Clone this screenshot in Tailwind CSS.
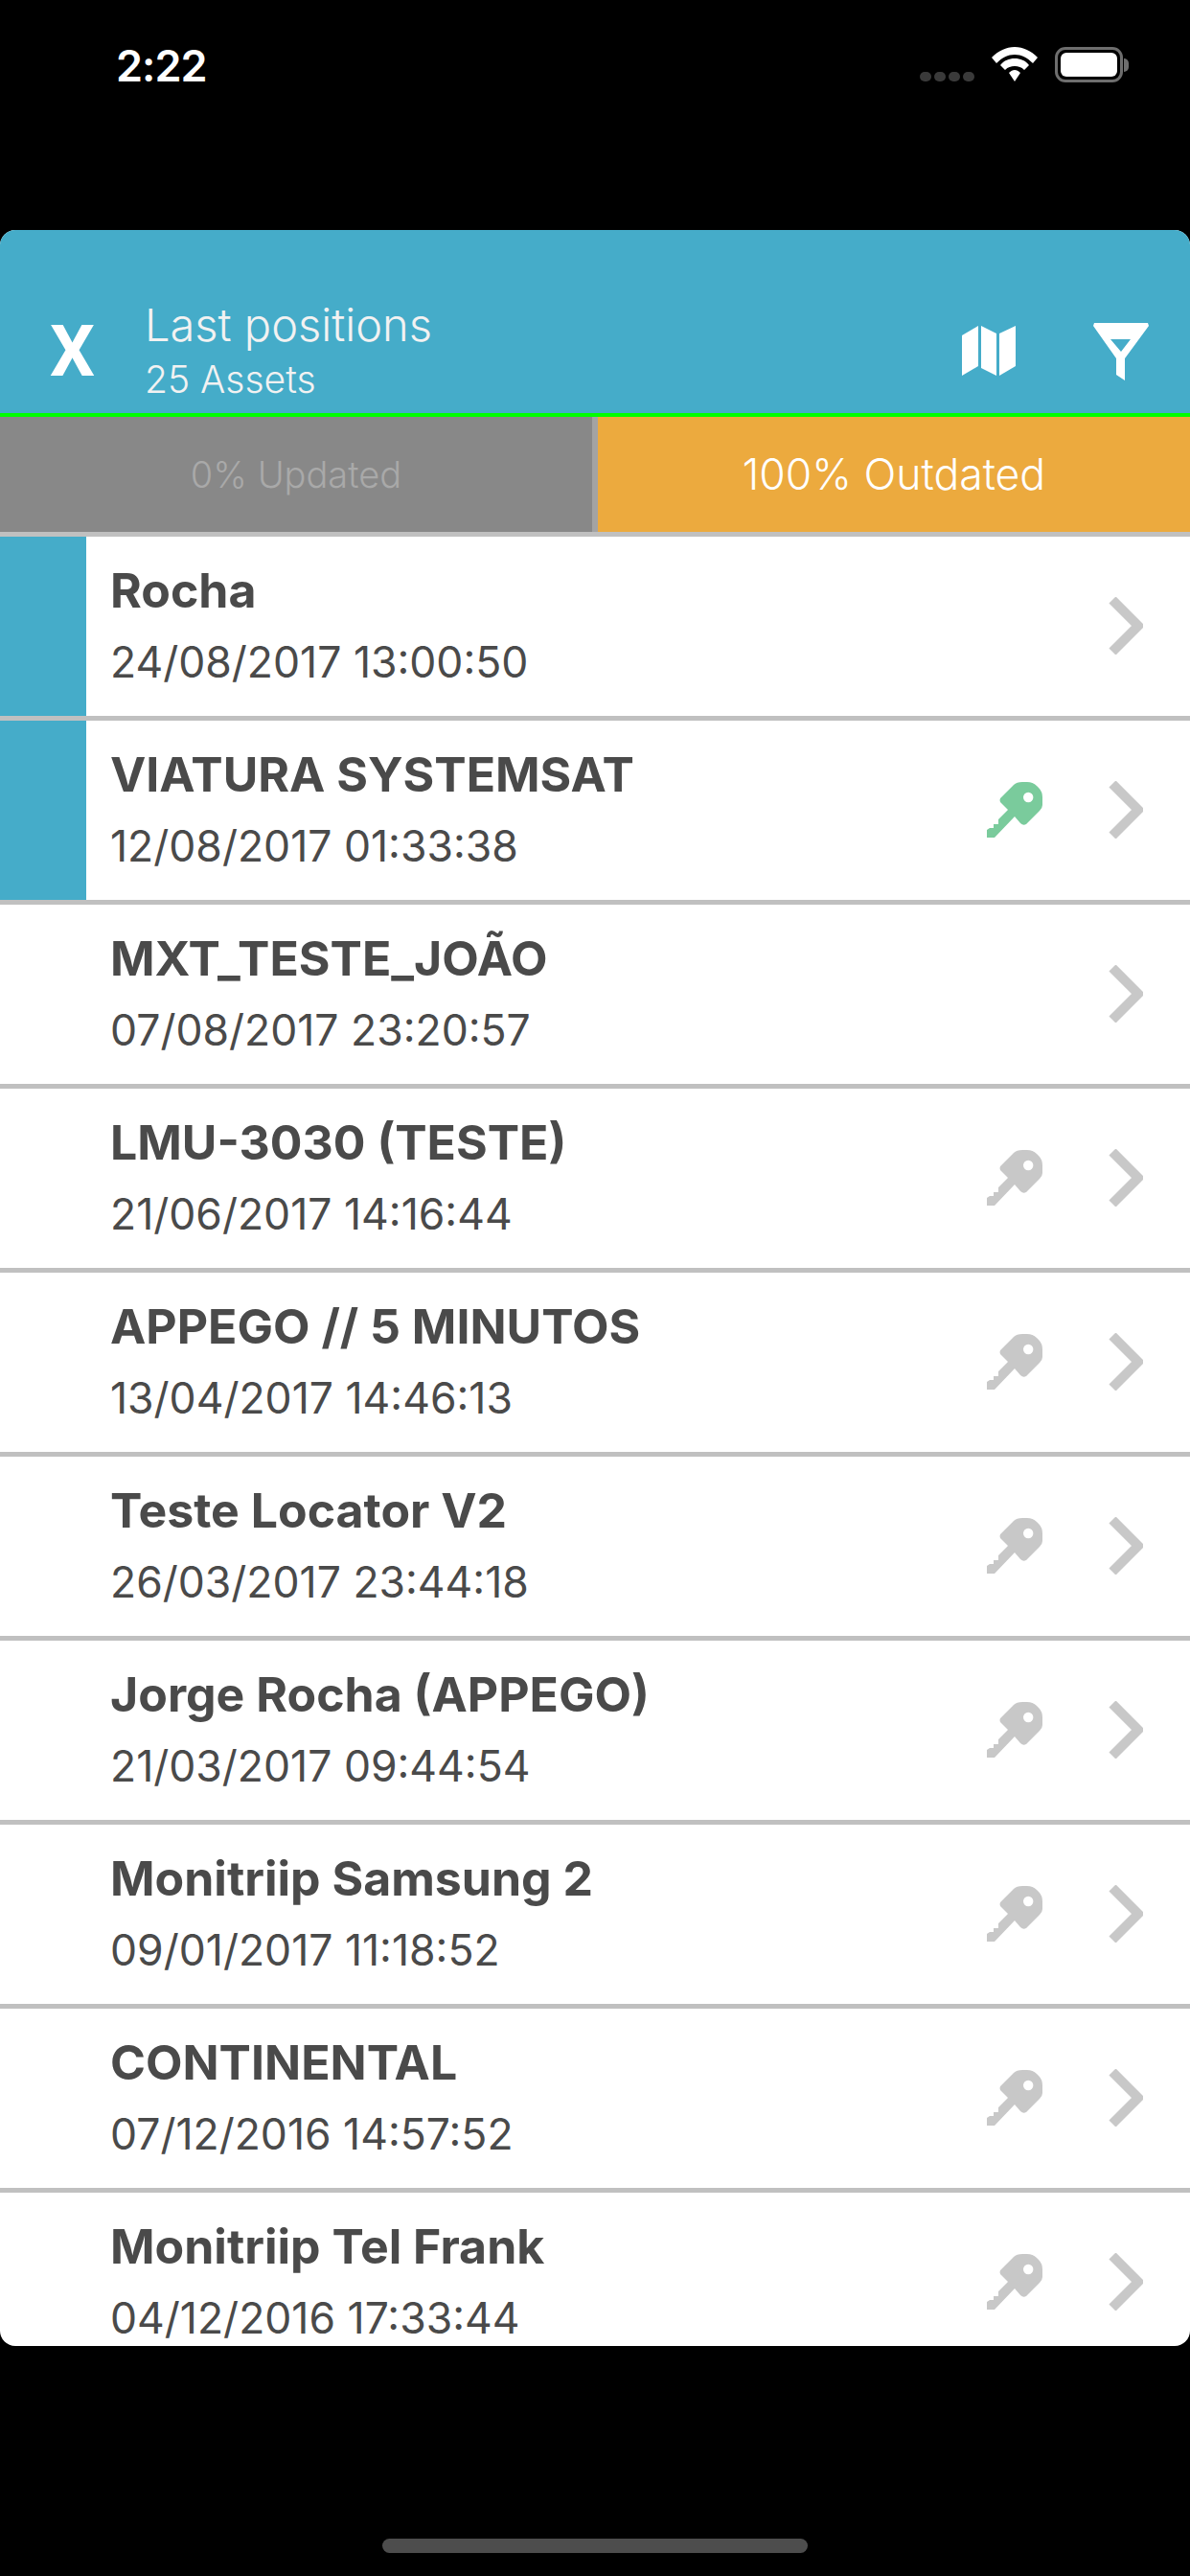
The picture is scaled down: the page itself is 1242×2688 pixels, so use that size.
<!DOCTYPE html>
<html lang="en">
<head>
  <meta charset="UTF-8" />
  <title>Last positions</title>
  <meta name="viewport" content="width=device-width, initial-scale=1.0" />
  <script src="https://cdn.jsdelivr.net/npm/@tailwindcss/browser@4"></script>
</head>
<body class="bg-black w-[1242px] h-[2688px] overflow-hidden font-['Inter',sans-serif]">

  <svg class="hidden">
    <symbol id="key" viewBox="0 0 58 58">
      <path fill-rule="evenodd" d="M14 17 L28 3 Q31 0 37 0 L42 0 Q48 0 52 4 L54 6 Q58 10 58 16 L58 24 Q58 27 55 30 L41 44 Q38 46 35 43 L29 36 L8 58 L0 58 L0 50 L3 48 L7 48 L7 44 L12 44 L12 39 L22 29 L14 21 Q13 19 14 17 Z M38 16 A5.2 5.2 0 1 0 48.400 16 A5.2 5.2 0 1 0 38 16 Z"/>
    </symbol>
    <symbol id="chevron" viewBox="0 0 36 60">
      <path d="M4 3 L31 30 L4 57" fill="none" stroke="currentColor" stroke-width="10"/>
    </symbol>
  </svg>

  <!-- status bar -->
  <div class="h-[240px] pt-[42px] pl-[121px] pr-[64px] flex items-start justify-between text-white">
    <span class="text-[45px] leading-[54px] font-semibold tracking-[-1px]">2:22</span>
    <div class="flex items-start gap-[18px] pt-[7px]">
      <div class="flex gap-[3px] pt-[26px]">
        <span class="w-[12px] h-[10px] rounded-full bg-[#3a3a3a]"></span>
        <span class="w-[12px] h-[10px] rounded-full bg-[#3a3a3a]"></span>
        <span class="w-[12px] h-[10px] rounded-full bg-[#3a3a3a]"></span>
        <span class="w-[12px] h-[10px] rounded-full bg-[#3a3a3a]"></span>
      </div>
      <svg width="48" height="36" viewBox="0 0 48 36" fill="white">
        <path d="M24 0 C33 0 41 4 48 11 L43 17 C37 11 31 8 24 8 C17 8 11 11 5 17 L0 11 C7 4 15 0 24 0 Z"/>
        <path d="M24 12 C30 12 35 14 39 19 L34 24 C31 21 28 20 24 20 C20 20 17 21 14 24 L9 19 C13 14 18 12 24 12 Z"/>
        <path d="M24 24 C26 24 28 25 30 27 L24 36 L18 27 C20 25 22 24 24 24 Z"/>
      </svg>
      <div class="flex items-center">
        <div class="w-[71px] h-[37px] rounded-[11px] border-[3px] border-[#6e6e6e] p-[3px]">
          <div class="w-full h-full rounded-[6px] bg-white"></div>
        </div>
        <div class="w-[5px] h-[14px] rounded-r-full bg-[#6e6e6e] ml-[1px]"></div>
      </div>
    </div>
  </div>

  <!-- card -->
  <div class="h-[2208px] rounded-[16px] overflow-hidden bg-white">
    <header class="h-[191px] bg-[#45acc9] flex items-end text-white pb-[14px]">
      <span class="w-[151px] pl-[52px] pb-[14px] text-[74px] leading-[72px] font-['Roboto',sans-serif] font-bold">X</span>
      <div class="flex-1 text-[#f2f2f2] font-light">
        <div class="text-[47px] leading-[56px] mb-[8px]">Last positions</div>
        <div class="text-[39px] leading-[42px]">25 Assets</div>
      </div>
      <svg class="mr-[81px] mb-[25px]" width="56" height="52" viewBox="0 0 56 52" fill="white">
        <path d="M0 10 L17 0 L17 42 L0 52 Z"/>
        <path d="M20 0 L36 8 L36 52 L20 44 Z"/>
        <path d="M39 8 L56 0 L56 42 L39 52 Z"/>
      </svg>
      <svg class="mr-[43px] mb-[20px]" width="58" height="60" viewBox="0 0 58 60" fill="white">
        <path fill-rule="evenodd" d="M1 0 L57 0 L58 3 L33 37 L33 60 L24 54 L24 37 L0 3 Z M18 17 L29 30 L39 17 Z"/>
      </svg>
    </header>
    <div class="h-[4px] bg-[#00ff00]"></div>

    <div class="flex h-[120px]">
      <div class="w-[618px] bg-[#888888] text-[#a9a9a9] text-[38px] font-light flex items-center justify-center">0% Updated</div>
      <div class="w-[6px] bg-[#a3a3a3]"></div>
      <div class="flex-1 bg-[#ecaa3e] text-white text-[44.5px] font-light flex items-center justify-center">100% Outdated</div>
    </div>
    <div class="h-[5px] bg-[#c0c0c0]"></div>

    <ul class="text-[#4a4a4a]">
      <li class="h-[192px] flex border-b-[5px] border-[#c0c0c0]">
        <div class="w-[90px] bg-[#45acc9]"></div>
        <div class="flex-1 pl-[25px] pt-[26px]">
          <div class="text-[50px] leading-[60px] font-bold">Rocha</div>
          <div class="text-[44.5px] leading-[52px] mt-[19px] font-normal">24/08/2017 13:00:50</div>
        </div>
        <svg class="w-[36px] h-[60px] mt-[63px] mr-[49px] text-[#c8c8c8]"><use href="#chevron"/></svg>
      </li>
      <li class="h-[192px] flex border-b-[5px] border-[#c0c0c0]">
        <div class="w-[90px] bg-[#45acc9]"></div>
        <div class="flex-1 pl-[25px] pt-[26px]">
          <div class="text-[50px] leading-[60px] font-bold">VIATURA SYSTEMSAT</div>
          <div class="text-[44.5px] leading-[52px] mt-[19px] font-normal">12/08/2017 01:33:38</div>
        </div>
        <svg class="w-[58px] h-[58px] mt-[64px] mr-[69px] fill-[#7acb9c]"><use href="#key"/></svg>
        <svg class="w-[36px] h-[60px] mt-[63px] mr-[49px] text-[#c8c8c8]"><use href="#chevron"/></svg>
      </li>
      <li class="h-[192px] flex border-b-[5px] border-[#c0c0c0]">
        <div class="flex-1 pl-[115px] pt-[26px]">
          <div class="text-[50px] leading-[60px] font-bold">MXT_TESTE_JOÃO</div>
          <div class="text-[44.5px] leading-[52px] mt-[19px] font-normal">07/08/2017 23:20:57</div>
        </div>
        <svg class="w-[36px] h-[60px] mt-[63px] mr-[49px] text-[#c8c8c8]"><use href="#chevron"/></svg>
      </li>
      <li class="h-[192px] flex border-b-[5px] border-[#c0c0c0]">
        <div class="flex-1 pl-[115px] pt-[26px]">
          <div class="text-[50px] leading-[60px] font-bold">LMU-3030 (TESTE)</div>
          <div class="text-[44.5px] leading-[52px] mt-[19px] font-normal">21/06/2017 14:16:44</div>
        </div>
        <svg class="w-[58px] h-[58px] mt-[64px] mr-[69px] fill-[#c8c8c8]"><use href="#key"/></svg>
        <svg class="w-[36px] h-[60px] mt-[63px] mr-[49px] text-[#c8c8c8]"><use href="#chevron"/></svg>
      </li>
      <li class="h-[192px] flex border-b-[5px] border-[#c0c0c0]">
        <div class="flex-1 pl-[115px] pt-[26px]">
          <div class="text-[50px] leading-[60px] font-bold">APPEGO // 5 MINUTOS</div>
          <div class="text-[44.5px] leading-[52px] mt-[19px] font-normal">13/04/2017 14:46:13</div>
        </div>
        <svg class="w-[58px] h-[58px] mt-[64px] mr-[69px] fill-[#c8c8c8]"><use href="#key"/></svg>
        <svg class="w-[36px] h-[60px] mt-[63px] mr-[49px] text-[#c8c8c8]"><use href="#chevron"/></svg>
      </li>
      <li class="h-[192px] flex border-b-[5px] border-[#c0c0c0]">
        <div class="flex-1 pl-[115px] pt-[26px]">
          <div class="text-[50px] leading-[60px] font-bold">Teste Locator V2</div>
          <div class="text-[44.5px] leading-[52px] mt-[19px] font-normal">26/03/2017 23:44:18</div>
        </div>
        <svg class="w-[58px] h-[58px] mt-[64px] mr-[69px] fill-[#c8c8c8]"><use href="#key"/></svg>
        <svg class="w-[36px] h-[60px] mt-[63px] mr-[49px] text-[#c8c8c8]"><use href="#chevron"/></svg>
      </li>
      <li class="h-[192px] flex border-b-[5px] border-[#c0c0c0]">
        <div class="flex-1 pl-[115px] pt-[26px]">
          <div class="text-[50px] leading-[60px] font-bold">Jorge Rocha (APPEGO)</div>
          <div class="text-[44.5px] leading-[52px] mt-[19px] font-normal">21/03/2017 09:44:54</div>
        </div>
        <svg class="w-[58px] h-[58px] mt-[64px] mr-[69px] fill-[#c8c8c8]"><use href="#key"/></svg>
        <svg class="w-[36px] h-[60px] mt-[63px] mr-[49px] text-[#c8c8c8]"><use href="#chevron"/></svg>
      </li>
      <li class="h-[192px] flex border-b-[5px] border-[#c0c0c0]">
        <div class="flex-1 pl-[115px] pt-[26px]">
          <div class="text-[50px] leading-[60px] font-bold">Monitriip Samsung 2</div>
          <div class="text-[44.5px] leading-[52px] mt-[19px] font-normal">09/01/2017 11:18:52</div>
        </div>
        <svg class="w-[58px] h-[58px] mt-[64px] mr-[69px] fill-[#c8c8c8]"><use href="#key"/></svg>
        <svg class="w-[36px] h-[60px] mt-[63px] mr-[49px] text-[#c8c8c8]"><use href="#chevron"/></svg>
      </li>
      <li class="h-[192px] flex border-b-[5px] border-[#c0c0c0]">
        <div class="flex-1 pl-[115px] pt-[26px]">
          <div class="text-[50px] leading-[60px] font-bold">CONTINENTAL</div>
          <div class="text-[44.5px] leading-[52px] mt-[19px] font-normal">07/12/2016 14:57:52</div>
        </div>
        <svg class="w-[58px] h-[58px] mt-[64px] mr-[69px] fill-[#c8c8c8]"><use href="#key"/></svg>
        <svg class="w-[36px] h-[60px] mt-[63px] mr-[49px] text-[#c8c8c8]"><use href="#chevron"/></svg>
      </li>
      <li class="h-[160px] flex">
        <div class="flex-1 pl-[115px] pt-[26px]">
          <div class="text-[50px] leading-[60px] font-bold">Monitriip Tel Frank</div>
          <div class="text-[44.5px] leading-[52px] mt-[19px] font-normal">04/12/2016 17:33:44</div>
        </div>
        <svg class="w-[58px] h-[58px] mt-[64px] mr-[69px] fill-[#c8c8c8]"><use href="#key"/></svg>
        <svg class="w-[36px] h-[60px] mt-[63px] mr-[49px] text-[#c8c8c8]"><use href="#chevron"/></svg>
      </li>
    </ul>
  </div>

  <!-- home indicator -->
  <div class="pt-[201px] flex justify-center">
    <div class="w-[444px] h-[15px] rounded-full bg-[#4d4d4d]"></div>
  </div>

</body>
</html>
